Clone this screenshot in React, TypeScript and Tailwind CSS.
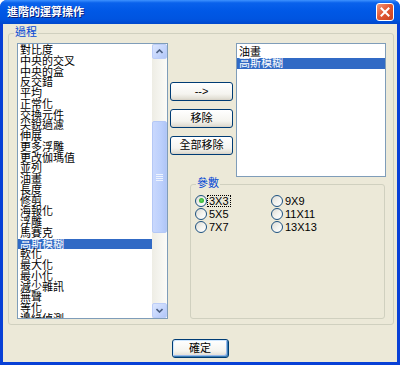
import type { ReactNode } from 'react';

const FONT = '"Liberation Sans", "Noto Sans CJK TC", sans-serif';

const PROCESSES = [
  '對比度', '中央的交叉', '中央的盒', '反交錯', '平均', '正常化', '交換元件', '尖銳過濾',
  '伸展', '更多浮雕', '更改伽瑪值', '並列', '油畫', '長度', '修剪', '海報化', '浮雕',
  '馬賽克', '高斯模糊', '軟化', '最大化', '最小化', '減少雜訊', '無聲', '等化', '邊緣偵測',
];

const CHOSEN = ['油畫', '高斯模糊'];

const SIZES = [
  ['3X3', '9X9'],
  ['5X5', '11X11'],
  ['7X7', '13X13'],
];

function ListItem({ label, selected }: { label: string; selected?: boolean }) {
  return (
    <div
      className={`h-[10.75px] shrink-0 whitespace-nowrap pl-[2px] text-[11px] leading-[11px] ${
        selected ? 'bg-[#316ac5] text-white' : 'text-black'
      }`}
    >
      {label}
    </div>
  );
}

function ScrollArrow({ up }: { up?: boolean }) {
  return (
    <div className="flex h-[15px] w-[15px] shrink-0 items-center justify-center rounded-[2px] border border-[#bccdf8] bg-[linear-gradient(135deg,#dbe6fe_0%,#c3d4fc_60%,#b1c6f7_100%)]">
      <svg width="7" height="5" viewBox="0 0 7 5" className={up ? '' : 'rotate-180'}>
        <path d="M0.5 4 L3.5 1 L6.5 4" fill="none" stroke="#4d6185" strokeWidth="1.6" />
      </svg>
    </div>
  );
}

function Scrollbar() {
  return (
    <div className="flex h-full w-[15px] shrink-0 flex-col bg-[linear-gradient(90deg,#eeede5_0%,#fbfbf8_100%)]">
      <ScrollArrow up />
      <div className="flex flex-1 flex-col">
        <div className="mt-[62px] flex h-[112px] w-[15px] flex-col items-center justify-center gap-[1px] rounded-[2px] border border-[#b4c8f6] bg-[linear-gradient(90deg,#c9d8fd_0%,#bcd0fc_60%,#b0c6f7_100%)]">
          <div className="h-px w-[7px] bg-[#eef4fe]" />
          <div className="h-px w-[7px] bg-[#eef4fe]" />
          <div className="h-px w-[7px] bg-[#eef4fe]" />
          <div className="h-px w-[7px] bg-[#eef4fe]" />
        </div>
      </div>
      <ScrollArrow />
    </div>
  );
}

function XPButton({ children, isDefault }: { children: ReactNode; isDefault?: boolean }) {
  return (
    <button
      className={`flex h-[19px] w-full items-center justify-center rounded-[3px] border border-[#003c74] bg-[linear-gradient(180deg,#ffffff_0%,#f5f4ef_65%,#e3e0d6_90%,#d6d0c5_100%)] text-[11px] leading-[11px] text-black ${
        isDefault ? 'shadow-[inset_-1px_-1px_0_#3c7fb1,inset_1px_1px_0_#cee7ff,inset_-2px_-2px_0_#97b8ec]' : ''
      }`}
    >
      {children}
    </button>
  );
}

function GroupBox({ label, className, children }: { label: string; className: string; children: ReactNode }) {
  return (
    <div className={`relative rounded-[3px] border border-[#d0d0bf] ${className}`}>
      <span className="absolute -top-[7px] left-[5px] bg-[#ece9d8] px-[1px] text-[11px] leading-[11px] text-[#0046d5]">
        {label}
      </span>
      {children}
    </div>
  );
}

function Radio({ label, checked }: { label: string; checked?: boolean }) {
  return (
    <div className="flex h-[13px] items-center">
      <span className="flex h-[12px] w-[12px] items-center justify-center rounded-full border border-[#1c5180] bg-[linear-gradient(135deg,#dcdbd4_0%,#f4f4f0_55%,#ffffff_100%)]">
        {checked && <span className="h-[5px] w-[5px] rounded-full bg-[radial-gradient(circle,#5fd55f_0%,#21a121_100%)]" />}
      </span>
      <span
        className={`px-[1px] text-[11px] leading-[10px] text-black ${
          checked ? 'border border-dotted border-black' : 'border border-transparent'
        }`}
      >
        {label}
      </span>
    </div>
  );
}

export default function App() {
  return (
    <div className="h-[365px] w-[400px] bg-white" style={{ fontFamily: FONT }}>
      <div className="flex h-full w-full flex-col rounded-t-[7px] bg-[#0840d6]">
        {/* title bar */}
        <div className="flex h-[24px] shrink-0 items-center rounded-t-[7px] bg-[linear-gradient(180deg,#3e92ff_0%,#0a62ec_12%,#0058e6_45%,#0054e0_80%,#0048cc_100%)]">
          <span className="pl-[7px] text-[11px] font-bold leading-[11px] text-white [text-shadow:1px_1px_0_#0a1f7a]">
            進階的運算操作
          </span>
          <div className="ml-auto mr-[6px] flex h-[18px] w-[18px] items-center justify-center rounded-[3px] border border-white bg-[linear-gradient(135deg,#f29a7e_0%,#e25a36_45%,#c9401c_100%)]">
            <svg width="10" height="10" viewBox="0 0 10 10">
              <path d="M1.5 1.5 L8.5 8.5 M8.5 1.5 L1.5 8.5" stroke="white" strokeWidth="2" strokeLinecap="square" />
            </svg>
          </div>
        </div>

        {/* body */}
        <div className="mx-[3px] mb-[3px] flex flex-1 flex-col bg-[#ece9d8]">
          <GroupBox label="過程" className="ml-[5px] mt-[9px] h-[292px] w-[386px]">
            <div className="flex pl-[8px] pt-[9px]">
              <div className="flex h-[276px] w-[151px] overflow-hidden border border-[#7f9db9] bg-white">
                <div className="flex flex-1 flex-col overflow-hidden pt-[1px]">
                  {PROCESSES.map((p) => (
                    <ListItem key={p} label={p} selected={p === '高斯模糊'} />
                  ))}
                </div>
                <Scrollbar />
              </div>

              <div className="ml-[2px] flex flex-col">
                <div className="flex">
                  <div className="flex w-[63px] flex-col gap-[8px] pt-[39px]">
                    <XPButton>--&gt;</XPButton>
                    <XPButton>移除</XPButton>
                    <XPButton>全部移除</XPButton>
                  </div>
                  <div className="ml-[3px] flex h-[134px] w-[150px] flex-col border border-[#7f9db9] bg-white pt-[3px]">
                    {CHOSEN.map((c) => (
                      <ListItem key={c} label={c} selected={c === '高斯模糊'} />
                    ))}
                  </div>
                </div>

                <GroupBox label="參數" className="ml-[20px] mt-[7px] h-[135px] w-[195px]">
                  <div className="grid grid-cols-[76px_1fr] pl-[4px] pt-[9px]">
                    {SIZES.map(([a, b]) => (
                      <div key={a} className="contents">
                        <Radio label={a} checked={a === '3X3'} />
                        <Radio label={b} />
                      </div>
                    ))}
                  </div>
                </GroupBox>
              </div>
            </div>
          </GroupBox>

          <div className="mt-[14px] w-[57px] self-center">
            <XPButton isDefault>確定</XPButton>
          </div>
        </div>
      </div>
    </div>
  );
}
